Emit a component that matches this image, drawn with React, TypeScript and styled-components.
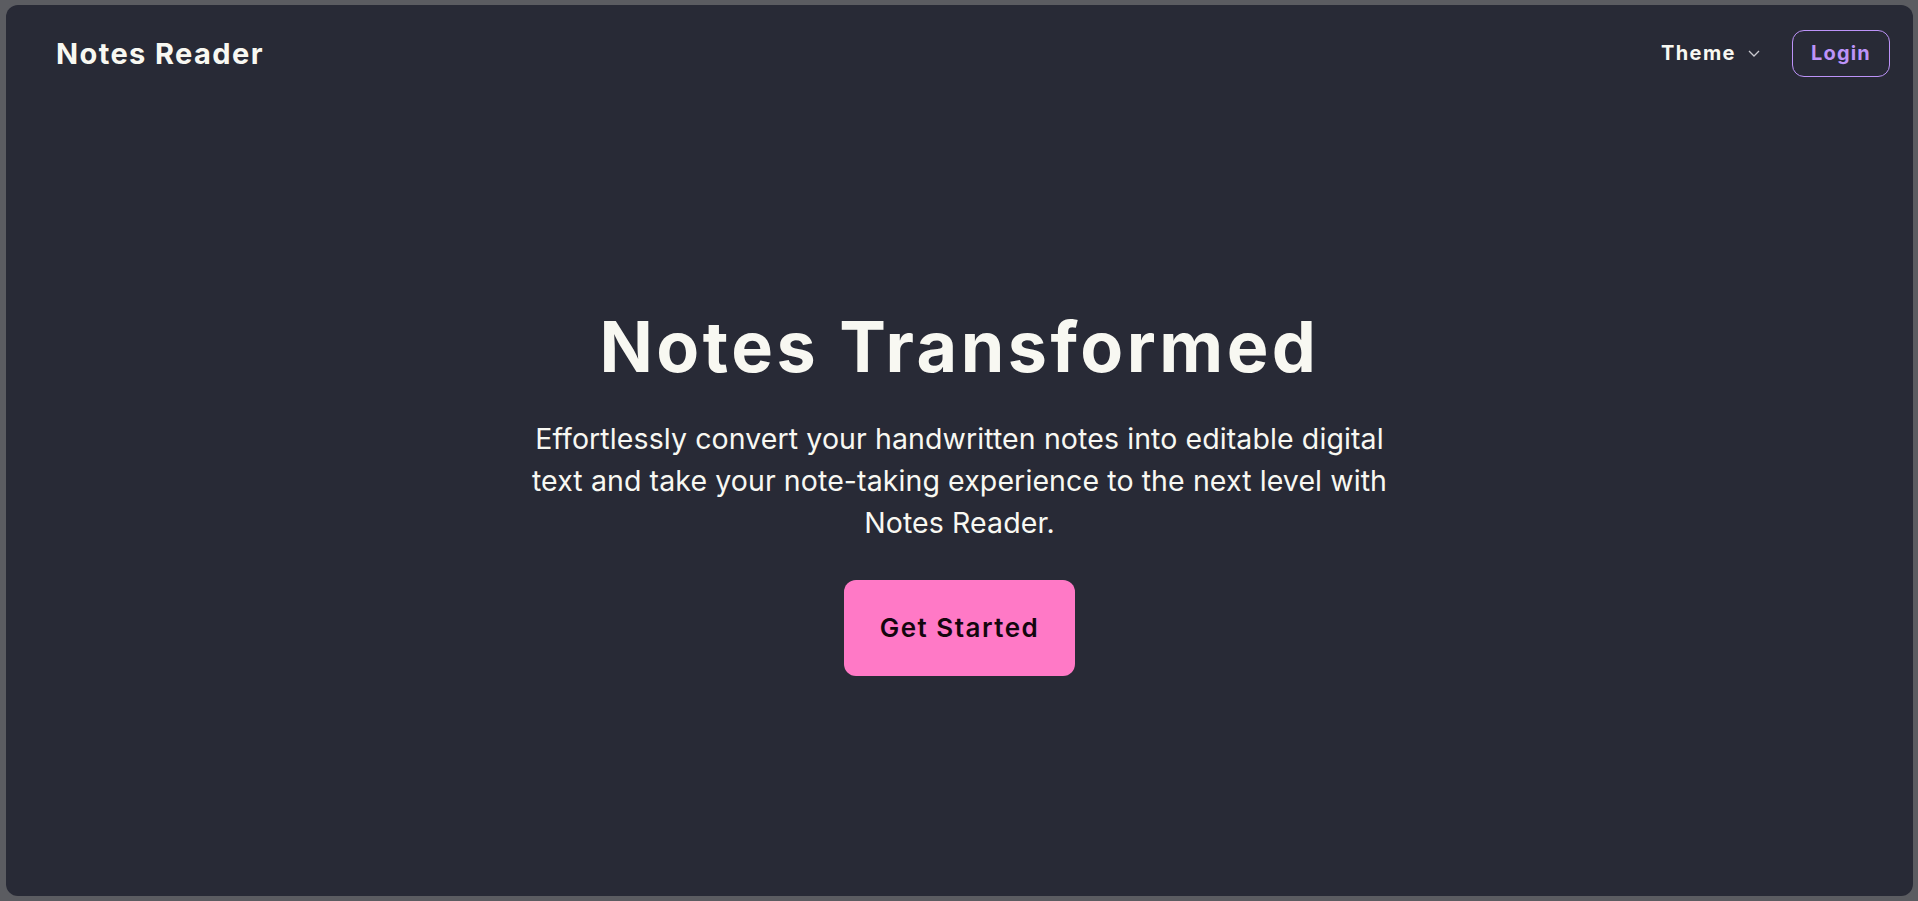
import React from 'react'
import styled, { createGlobalStyle } from 'styled-components'

const GlobalStyle = createGlobalStyle`
  html, body {
    margin: 0;
    padding: 0;
    background: #5b5c61;
  }
  #root {
    height: 100vh;
  }
  * {
    box-sizing: border-box;
  }
`

const App: React.FC = () => {
  return (
    <>
      <GlobalStyle />
      <Frame>
        <Panel>
          <NavBar>
            <Brand>Notes Reader</Brand>
            <NavActions>
              <ThemeButton>
                Theme
                <svg width='12' height='7' viewBox='0 0 12 7' fill='none'>
                  <path d='M1 1l5 5 5-5' stroke='#c9c9cf' strokeWidth='1.3' />
                </svg>
              </ThemeButton>
              <LoginButton>Login</LoginButton>
            </NavActions>
          </NavBar>
          <Hero>
            <HeroContent>
              <Title>Notes Transformed</Title>
              <Lead>
                Effortlessly convert your handwritten notes into editable digital text and take
                your note-taking experience to the next level with Notes Reader.
              </Lead>
              <PrimaryButton>Get Started</PrimaryButton>
            </HeroContent>
          </Hero>
        </Panel>
      </Frame>
    </>
  )
}

const Frame = styled.div`
  height: 100%;
  padding: 5px 5px 5px 6px;
  font-family: Inter, 'Liberation Sans', sans-serif;
`

const Panel = styled.div`
  height: 100%;
  display: flex;
  flex-direction: column;
  background: #282a36;
  border-radius: 12px;
  color: #f8f8f2;
`

const NavBar = styled.nav`
  height: 96px;
  flex-shrink: 0;
  display: flex;
  align-items: center;
  justify-content: space-between;
  padding: 0 23px 0 50px;
`

const Brand = styled.div`
  font-size: 29px;
  font-weight: 700;
  letter-spacing: 1.4px;
`

const NavActions = styled.div`
  display: flex;
  align-items: center;
  gap: 14px;
`

const ThemeButton = styled.button`
  display: flex;
  align-items: center;
  gap: 12px;
  height: 48px;
  padding: 0 18px;
  background: transparent;
  border: none;
  color: #f8f8f2;
  font-family: inherit;
  font-size: 20px;
  font-weight: 700;
  letter-spacing: 1.4px;
  cursor: pointer;
`

const LoginButton = styled.button`
  height: 47px;
  padding: 0 18px;
  background: transparent;
  border: 1.5px solid #bd93f9;
  border-radius: 12px;
  color: #bd93f9;
  font-family: inherit;
  font-size: 20px;
  font-weight: 700;
  letter-spacing: 1.2px;
  cursor: pointer;
`

const Hero = styled.main`
  flex: 1;
  display: flex;
  align-items: center;
  justify-content: center;
  padding-bottom: 10px;
`

const HeroContent = styled.div`
  max-width: 864px;
  display: flex;
  flex-direction: column;
  align-items: center;
  text-align: center;
`

const Title = styled.h1`
  margin: 0;
  font-size: 70px;
  line-height: 1;
  font-weight: 700;
  letter-spacing: 3.5px;
`

const Lead = styled.p`
  margin: 0;
  padding: 36px 0;
  font-size: 28.5px;
  line-height: 42px;
  font-weight: 400;
  letter-spacing: 0.1px;
`

const PrimaryButton = styled.button`
  height: 96px;
  padding: 0 36px;
  background: #ff79c6;
  border: none;
  border-radius: 12px;
  color: #14060e;
  font-family: inherit;
  font-size: 26px;
  font-weight: 600;
  letter-spacing: 1.5px;
  cursor: pointer;
`

export default App
